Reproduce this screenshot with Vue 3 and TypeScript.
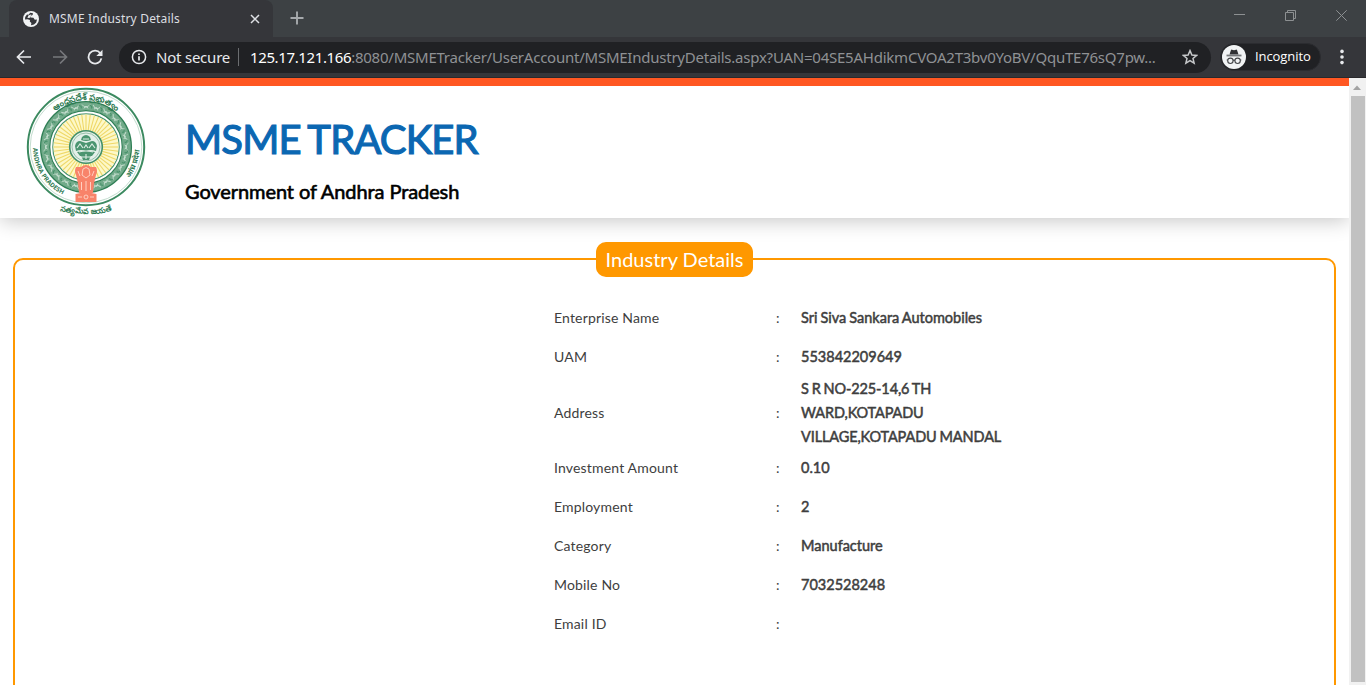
<script setup lang="ts">
interface Detail {
  label: string
  lines: string[]
}

const details: Detail[] = [
  { label: 'Enterprise Name', lines: ['Sri Siva Sankara Automobiles'] },
  { label: 'UAM', lines: ['553842209649'] },
  { label: 'Address', lines: ['S R NO-225-14,6 TH', 'WARD,KOTAPADU', 'VILLAGE,KOTAPADU MANDAL'] },
  { label: 'Investment Amount', lines: ['0.10'] },
  { label: 'Employment', lines: ['2'] },
  { label: 'Category', lines: ['Manufacture'] },
  { label: 'Mobile No', lines: ['7032528248'] },
  { label: 'Email ID', lines: [] },
]

const rays = Array.from({ length: 48 }, (_, i) => i * 7.5)
const petals = Array.from({ length: 24 }, (_, i) => i * 15)
</script>

<template>
  <div class="window">
    <header class="tabstrip">
      <div class="tab">
        <svg class="globe" width="16" height="16" viewBox="0 0 16 16">
          <circle cx="8" cy="8" r="8" fill="#f1f3f4" />
          <path d="M7.2 1.8 10 2.2 9.6 4 7.4 5 7.6 6.6 10.4 6.8 11.8 8.8 14 8.4 13.2 11.4 11 13.6 8 14.2 8.4 12 6.8 10.6 7 9 4.6 8.2 2 8.6 2.2 6 4 3.4 5.6 3.8Z" fill="#35363a" />
          <path d="M5.4 4.6 8.4 3.2 7 6.8 4.4 7Z" fill="#f1f3f4" />
        </svg>
        <span class="tab-title">MSME Industry Details</span>
        <svg class="tab-close" width="10" height="10" viewBox="0 0 10 10"><path d="M1 1 9 9M9 1 1 9" stroke="#dfe1e5" stroke-width="1.5" /></svg>
      </div>
      <svg class="plus" width="14" height="14" viewBox="0 0 14 14"><path d="M7 .5V13.5M.5 7H13.5" stroke="#a7aaad" stroke-width="1.9" /></svg>
      <div class="controls">
        <svg width="11" height="11" viewBox="0 0 11 11"><path d="M0 4.5H11" stroke="#8d9092" /></svg>
        <svg width="11" height="11" viewBox="0 0 11 11" fill="none" stroke="#8d9092"><path d="M.5 2.5H8.5V10.5H.5ZM2.5 2.5V.5H10.5V8.5H8.5" /></svg>
        <svg width="11" height="11" viewBox="0 0 11 11"><path d="M.3.3 10.7 10.7M10.7.3.3 10.7" stroke="#8d9092" /></svg>
      </div>
    </header>

    <nav class="toolbar">
      <svg class="nav back" width="16" height="16" viewBox="0 0 16 16"><path d="M15 8H2M8 1.5 1.5 8 8 14.5" fill="none" stroke="#e8eaed" stroke-width="1.7" /></svg>
      <svg class="nav fwd" width="16" height="16" viewBox="0 0 16 16"><path d="M1 8H14M8 1.5 14.5 8 8 14.5" fill="none" stroke="#77797c" stroke-width="1.7" /></svg>
      <svg class="nav reload" width="16" height="16" viewBox="0 0 16 16"><path d="M13.3 4.2A6.5 6.5 0 1 0 14.4 9.4" fill="none" stroke="#e8eaed" stroke-width="1.8" /><path d="M15.5.8V7H9.3Z" fill="#e8eaed" /></svg>
      <div class="omnibox">
        <svg class="info" width="16" height="16" viewBox="0 0 16 16"><circle cx="8" cy="8" r="6.6" fill="none" stroke="#e8eaed" stroke-width="1.5" /><path d="M8 7.2V11.6M8 4.4V6" stroke="#e8eaed" stroke-width="1.7" /></svg>
        <span class="secure">Not secure</span>
        <span class="bar"></span>
        <span class="url"><span class="host">125.17.121.166</span><span class="path">:8080/MSMETracker/UserAccount/MSMEIndustryDetails.aspx?UAN=04SE5AHdikmCVOA2T3bv0YoBV/QquTE76sQ7pw...</span></span>
        <svg class="star" width="16" height="16" viewBox="0 0 16 16"><path d="M8 1.6 9.9 6 14.6 6.4 11 9.5 12.1 14.1 8 11.6 3.9 14.1 5 9.5 1.4 6.4 6.1 6Z" fill="none" stroke="#c6c8ca" stroke-width="1.5" /></svg>
      </div>
      <div class="incognito">
        <svg width="24" height="24" viewBox="0 0 24 24">
          <circle cx="12" cy="12" r="12" fill="#f1f3f4" />
          <path d="M7.5 9.5 9 5Q9.2 4.4 10 4.7L12 5.3 14 4.7Q14.8 4.4 15 5L16.5 9.5Z" fill="#303134" />
          <path d="M4.5 10.5H19.5" stroke="#77797c" stroke-width="1.8" />
          <g fill="none" stroke="#46484b" stroke-width="1.1"><circle cx="8.4" cy="15.8" r="2.7" /><circle cx="15.6" cy="15.8" r="2.7" /><path d="M11 15.5Q12 14.8 13 15.5M4.7 15H5.8M18.2 15H19.3" /></g>
        </svg>
        <span>Incognito</span>
      </div>
      <svg class="menu" width="4" height="16" viewBox="0 0 4 16" fill="#e8eaed"><circle cx="2" cy="2.4" r="1.8" /><circle cx="2" cy="8" r="1.8" /><circle cx="2" cy="13.6" r="1.8" /></svg>
    </nav>

    <div class="viewport">
      <main class="page">
        <div class="masthead">
          <svg class="seal" width="122" height="132" viewBox="-61 -61 122 132">
            <defs>
              <path id="arc-top" d="M-47 0A47 47 0 0 1 47 0" />
              <path id="arc-left" d="M-53 0A53 53 0 0 0 0 53" />
              <path id="arc-right" d="M0 53.5A53.5 53.5 0 0 0 53.5 0" />
              <path id="arc-bottom" d="M-42 58Q0 76 42 58" />
            </defs>
            <circle r="58.2" fill="#fff" stroke="#3c8a60" stroke-width="2" />
            <circle r="55.8" fill="none" stroke="#a9cdb9" stroke-width=".7" />
            <circle r="40.8" fill="none" stroke="#72ab8a" stroke-width="8" />
            <circle r="45.3" fill="none" stroke="#2f7f55" stroke-width="1.5" />
            <circle r="36.3" fill="none" stroke="#2f7f55" stroke-width="1.3" />
            <circle r="34.6" fill="#fff" />
            <circle r="33.2" fill="none" stroke="#4b9570" stroke-width="1.2" />
            <g fill="none" stroke="#c3dccd" stroke-width="1"><path v-for="a in petals" :key="a" :transform="`rotate(${a})`" d="M-4-42.5Q0-37 4-42.5M-2-38.5Q0-43 2-38.5" /></g>
            <g fill="none" stroke="#458f69" stroke-width="1"><path v-for="a in petals" :key="a" :transform="`rotate(${a + 7.5})`" d="M-2-42Q2-41 0-39" /></g>
            <circle r="32.5" fill="#fdf8c8" />
            <g stroke="#efd868" stroke-width="1.1"><path v-for="a in rays" :key="a" :transform="`rotate(${a})`" d="M0-17V-32.5" /></g>
            <circle r="16.3" fill="#e4f0e9" stroke="#438f67" stroke-width="1.6" />
            <circle r="14" fill="none" stroke="#78ae90" stroke-width=".7" />
            <g fill="#4b9570">
              <path d="M-4-10Q0-14 4-10L5-7Q0-5-5-7ZM-5 8H5L3 13H-3Z" />
              <path d="M-11-1Q-10-6-6-6L0-4 6-6Q10-6 11-1L10 4Q5 2 0 4-5 2-10 4ZM-9 5Q0 3 9 5L6 9H-6Z" />
            </g>
            <g fill="none" stroke="#e0efe6" stroke-width="1.1"><path d="M-9 1-6-3-3 1M3 1 6-3 9 1M-2 1 0-2 2 1M-3-8H3M-7 5Q0 3 7 5M-4 10H4M0 7V12" /></g>
            <g fill="#f8836a">
              <path d="M-5 20Q0 16 5 20L10 20Q12 24 10 28L9 32 8 37H-8L-9 32-10 28Q-12 24-10 20Z" />
              <path d="M-8 36H8L7 46H-7Z" /><path d="M-10.5 47Q0 44 10.5 47V55H-10.5Z" />
            </g>
            <g fill="none" stroke="#ffd0c1" stroke-width="1"><path d="M-3 22Q0 19 3 22L4 28 0 31-4 28ZM-8 24-6 29M8 24 6 29M-4.500 35V43M0 34V44M4.500 35V43M-8 50H-4M4 50H8" /><circle cy="50" r="2" /></g>
            <g class="seal-text" fill="#2f7c54">
              <text font-size="8.6"><textPath href="#arc-top" startOffset="50%" text-anchor="middle">ఆంధ్రప్రదేశ్ ప్రభుత్వం</textPath></text>
              <text font-size="6.3"><textPath href="#arc-left" startOffset="1">ANDHRA PRADESH</textPath></text>
              <text font-size="7.400"><textPath href="#arc-right" startOffset="51">आंध्र प्रदेश</textPath></text>
              <text font-size="7.8"><textPath href="#arc-bottom" startOffset="50%" text-anchor="middle">సత్యమేవ జయతే</textPath></text>
            </g>
          </svg>
          <div class="titles">
            <h1>MSME TRACKER</h1>
            <h2>Government of Andhra Pradesh</h2>
          </div>
        </div>

        <fieldset class="panel">
          <legend>Industry Details</legend>
          <dl class="details">
            <div v-for="d in details" :key="d.label" class="row" :class="{ multi: d.lines.length > 1 }">
              <dt>{{ d.label }}</dt>
              <span class="colon">:</span>
              <dd><div v-for="line in d.lines" :key="line">{{ line }}</div></dd>
            </div>
          </dl>
        </fieldset>
      </main>
      <div class="scrollbar">
        <svg width="16" height="18" viewBox="0 0 16 18"><path d="M4 12 8 7.5 12 12Z" fill="#a3a3a3" /></svg>
        <div class="thumb"></div>
      </div>
    </div>
  </div>
</template>

<style>
html, body { margin: 0; overflow: hidden; }
</style>

<style scoped>
.window { width: 1366px; height: 685px; display: flex; flex-direction: column; overflow: hidden; background: #fff; font-family: "Open Sans", "Noto Sans", sans-serif; }
svg { display: block; flex: none; }
.window span { white-space: nowrap; }
.tabstrip { height: 37px; flex: none; display: flex; background: #3d4144; padding-left: 9px; }
.tab { width: 264px; height: 37px; box-sizing: border-box; display: flex; align-items: center; background: #35363a; border-radius: 8px 8px 0 0; padding: 0 13px 0 14px; }
.tab-title { flex: 1; margin-left: 10px; color: #dcdee1; font-family: "Noto Sans", sans-serif; font-size: 12px; letter-spacing: .18px; }
.plus { margin: 11px 0 0 17px; }
.controls { margin-left: auto; padding: 10px 19px 0 0; display: flex; gap: 40px; }
.toolbar { height: 41px; flex: none; box-sizing: border-box; display: flex; align-items: center; background: #35363a; border-bottom: 1px solid #29292c; padding: 0 22px 0 16px; }
.fwd { margin-left: 20px; }
.reload { margin-left: 19px; }
.omnibox { width: 1092px; height: 31px; margin-left: 16px; box-sizing: border-box; border-radius: 16px; background: #202124; display: flex; align-items: center; padding: 0 13px 0 12px; font-size: 15px; color: #e8eaed; font-family: "Noto Sans", sans-serif; }
.secure { width: 74px; margin-left: 9px; letter-spacing: -.22px; }
.bar { width: 1px; height: 18px; margin: 0 11px 0 8px; background: #6b6d70; }
.url { width: 920px; }
.star { margin-left: auto; }
.host { color: #fff; letter-spacing: -.38px; }
.path { color: #8f9194; letter-spacing: -.235px; }
.incognito { height: 28px; width: 101px; margin-left: 9px; box-sizing: border-box; border: 1px solid #2b2c30; border-radius: 15px; background: #202124; display: flex; align-items: center; gap: 9px; padding-left: 1px; color: #fff; font-size: 13px; letter-spacing: -.08px; }
.incognito span { margin-top: -2px; }
.menu { margin-left: auto; }
.viewport { flex: 1; min-height: 0; display: flex; }
.page { width: 1349px; box-sizing: border-box; border-top: 8px solid #ff5722; background: #fff; font-family: Lato, sans-serif; }
.masthead { height: 132px; display: flex; box-shadow: 0 2px 20px rgba(0, 0, 0, .24); clip-path: inset(0 0 -40px 0); padding-left: 25px; }
.seal-text { font-family: "Noto Sans", sans-serif; font-weight: 700; }
.titles { margin-left: 38px; padding-top: 30px; }
h1 { margin: 0; font-size: 40px; line-height: 46px; font-weight: 400; letter-spacing: -.85px; word-spacing: -1.5px; color: #0b67b2; -webkit-text-stroke: 1.2px #0b67b2; }
h2 { margin: 17px 0 0; font-size: 20px; line-height: 24px; font-weight: 400; letter-spacing: -.09px; color: #000; -webkit-text-stroke: .6px #000; }
.panel { width: 1323px; height: 520px; margin: 24px 0 0 13px; box-sizing: border-box; border: 2px solid #ff9800; border-radius: 10px; padding: 0; }
legend { margin: 0 auto; height: 34px; box-sizing: border-box; padding: 0 10px; background: #ff9800; box-shadow: 0 1px 0 #ff9800; color: #fff; border-radius: 10px; font-size: 20px; line-height: 35px; }
.details { margin: 22px 0 0 539px; font-size: 14px; line-height: 24px; color: #3e3e3e; }
.row { display: grid; grid-template-columns: 222px 25px 230px; align-items: center; min-height: 39px; }
.row.multi { padding-top: 1px; margin-bottom: -1px; }
dt { letter-spacing: .17px; }
dd { margin: 0; font-size: 14.5px; word-spacing: -.7px; -webkit-text-stroke: .5px #3e3e3e; }
.multi dd { letter-spacing: -.12px; }
.scrollbar { width: 17px; background: #f1f1f1; }
.thumb { width: 14px; height: 586px; margin-left: 2px; background: #c1c1c1; }
</style>
